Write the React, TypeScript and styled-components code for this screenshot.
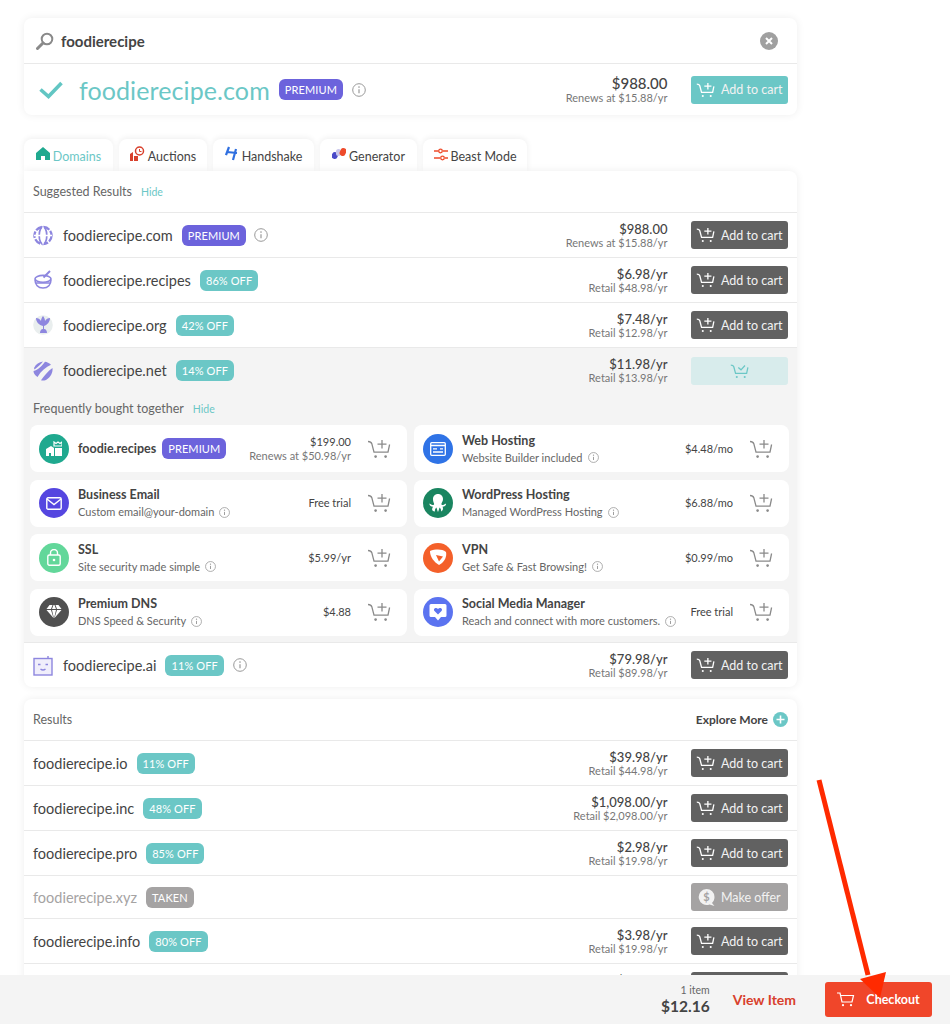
import React from "react";
import styled, { createGlobalStyle } from "styled-components";

const Global = createGlobalStyle`
  html, body { margin: 0; padding: 0; height: 100%; overflow: hidden; background: #fff; }
  body { font-family: "Lato", "Open Sans", "Liberation Sans", sans-serif; color: #444; }
  * { box-sizing: border-box; }
`;

const Page = styled.div`
  width: 773px;
  margin-left: 24px;
  padding-top: 18px;
  display: flex;
  flex-direction: column;
`;
const Card = styled.section`
  background: #fff;
  border-radius: 8px;
  box-shadow: 0 0 8px rgba(0, 0, 0, 0.07);
  overflow: hidden;
`;
const SearchRow = styled.div`
  height: 46px;
  display: flex;
  align-items: center;
  padding: 0 19px 0 12px;
  gap: 7px;
  border-bottom: 1px solid #e9e9e9;
`;
const SearchText = styled.div`
  font-size: 15px;
  font-weight: 700;
  color: #444;
  flex: 1;
`;
const Hero = styled.div`
  height: 51px;
  display: flex;
  align-items: center;
  padding: 0 9px 0 15px;
`;
const HeroName = styled.div`
  font-size: 25px;
  color: #6bc7c6;
  margin: 0 9px 0 16px;
  letter-spacing: 0.1px;
`;
const Badge = styled.span<{ $kind: "premium" | "off" | "taken" }>`
  display: inline-flex;
  align-items: center;
  height: 21px;
  padding: 0 6px;
  border-radius: 6px;
  font-size: 11px;
  letter-spacing: 0.1px;
  color: #fff;
  white-space: nowrap;
  background: ${(p) => (p.$kind === "premium" ? "#6c63dc" : p.$kind === "off" ? "#6bc7c6" : "#a5a3a3")};
`;
const Spacer = styled.div`
  flex: 1;
`;
const Price = styled.div`
  display: flex;
  flex-direction: column;
  align-items: flex-end;
  margin-right: 23px;
`;
const PriceMain = styled.div<{ $big?: boolean }>`
  font-size: ${(p) => (p.$big ? 15 : 13)}px;
  line-height: ${(p) => (p.$big ? 16 : 14)}px;
  font-weight: 500;
  color: #444;
`;
const PriceSub = styled.div`
  font-size: 11px;
  line-height: 13px;
  color: #777;
`;
const CartButton = styled.button<{ $tone: "dark" | "teal" | "pale" | "grey" }>`
  width: 97.5px;
  height: 28px;
  border: 0;
  border-radius: 3px;
  display: flex;
  align-items: center;
  justify-content: center;
  gap: 6px;
  padding: 0;
  font: inherit;
  font-size: 12.5px;
  color: ${(p) => (p.$tone === "pale" ? "#6bc7c6" : "#f2f2f2")};
  background: ${(p) =>
    p.$tone === "dark" ? "#616161" : p.$tone === "teal" ? "#6bc7c6" : p.$tone === "pale" ? "#d8ecec" : "#a5a3a3"};
`;
const Tabs = styled.nav`
  display: flex;
  gap: 6px;
  margin-top: 24px;
  height: 32px;
  position: relative;
`;
const Tab = styled.div<{ $active?: boolean; $w: number }>`
  width: ${(p) => p.$w}px;
  background: #fff;
  border-radius: 8px 8px 0 0;
  box-shadow: 0 -1px 6px rgba(0, 0, 0, 0.07);
  display: flex;
  align-items: center;
  justify-content: center;
  gap: 3px;
  font-size: 12.5px;
  padding-top: 2px;
  color: ${(p) => (p.$active ? "#6bc7c6" : "#444")};
`;
const Panel = styled(Card)`
  border-radius: 0 8px 8px 8px;
  position: relative;
`;
const HeadRow = styled.div`
  height: 42px;
  display: flex;
  align-items: center;
  padding: 0 9px;
  gap: 9px;
  border-bottom: 1px solid #e9e9e9;
  font-size: 12.5px;
  color: #666;
`;
const HideLink = styled.span`
  color: #6bc7c6;
  font-size: 10.5px;
  padding-top: 1px;
`;
const Row = styled.div<{ $h?: number; $flat?: boolean }>`
  height: ${(p) => p.$h ?? 45}px;
  display: flex;
  align-items: center;
  padding: 0 9px;
  border-bottom: ${(p) => (p.$flat ? "0" : "1px solid #e9e9e9")};
`;
const RowIcon = styled.div`
  width: 20px;
  height: 20px;
  margin-right: 10px;
  display: flex;
`;
const RowName = styled.div<{ $muted?: boolean }>`
  font-size: 14.5px;
  color: ${(p) => (p.$muted ? "#a5a3a3" : "#444")};
  margin-right: 9px;
  white-space: nowrap;
`;
const Grey = styled.div`
  background: #f4f4f4;
  height: 295px;
  padding-bottom: 8px;
  border-bottom: 1px solid #e9e9e9;
`;
const SubHead = styled.div`
  display: flex;
  align-items: center;
  gap: 9px;
  height: 32px;
  padding: 0 9px 2px;
  font-size: 12.5px;
  color: #666;
`;
const Bundle = styled.div`
  display: grid;
  grid-template-columns: 377px 375px;
  grid-auto-rows: 47px;
  column-gap: 7px;
  row-gap: 7.5px;
  padding-left: 6px;
`;
const Item = styled.div`
  background: #fff;
  border-radius: 8px;
  display: flex;
  align-items: center;
  padding: 0 16px 0 9px;
`;
const Disc = styled.div<{ $bg: string }>`
  width: 30px;
  height: 30px;
  border-radius: 50%;
  background: ${(p) => p.$bg};
  display: flex;
  align-items: center;
  justify-content: center;
  margin-right: 9px;
  flex: none;
`;
const ItemBody = styled.div`
  display: flex;
  flex-direction: column;
  gap: 3px;
`;
const ItemTitle = styled.div`
  font-size: 12.5px;
  line-height: 15px;
  font-weight: 700;
  color: #444;
  white-space: nowrap;
`;
const ItemSub = styled.div`
  font-size: 11px;
  line-height: 14px;
  color: #666;
  display: flex;
  align-items: center;
  gap: 5px;
  white-space: nowrap;
`;
const ItemPrice = styled.div`
  display: flex;
  flex-direction: column;
  align-items: flex-end;
  margin-right: 16px;
  font-size: 11px;
  line-height: 14px;
  color: #444;
`;
const ItemPriceSub = styled.div`
  color: #777;
`;
const Results = styled(Card)`
  margin-top: 12px;
  height: 400px;
`;
const ExploreMore = styled.div`
  margin-left: auto;
  display: flex;
  align-items: center;
  gap: 5px;
  font-size: 12px;
  font-weight: 700;
  color: #444;
`;
const Footer = styled.footer`
  position: fixed;
  left: 0;
  right: 0;
  bottom: 0;
  height: 49px;
  background: #f4f4f4;
  display: flex;
  align-items: center;
  justify-content: flex-end;
  padding: 0 18px 0 0;
`;
const Total = styled.div`
  display: flex;
  flex-direction: column;
  align-items: flex-end;
  margin-right: 23px;
`;
const TotalCount = styled.div`
  font-size: 10.5px;
  line-height: 13px;
  color: #666;
`;
const TotalSum = styled.div`
  font-size: 15.5px;
  line-height: 18px;
  font-weight: 700;
  color: #444;
`;
const ViewItem = styled.div`
  font-size: 14px;
  font-weight: 700;
  color: #d8402c;
  margin-right: 29px;
`;
const Checkout = styled.button`
  width: 107px;
  height: 35px;
  border: 0;
  border-radius: 3px;
  background: #f0462a;
  color: #fff;
  font: inherit;
  font-size: 12.5px;
  font-weight: 700;
  display: flex;
  align-items: center;
  justify-content: center;
  gap: 11px;
  padding: 0;
`;
const Arrow = styled.svg`
  position: fixed;
  left: 800px;
  top: 770px;
  pointer-events: none;
`;

const Info = ({ s = 13, ml = 0 }: { s?: number; ml?: number }) => (
  <svg width={s} height={s} viewBox="0 0 14 14" fill="none" style={ml ? { marginLeft: ml } : undefined}>
    <circle cx="7" cy="7" r="6.3" stroke="#999" strokeWidth="1" />
    <path d="M7 6.2v4" stroke="#999" strokeWidth="1.2" />
    <circle cx="7" cy="4.1" r=".8" fill="#999" />
  </svg>
);

const CartPlus = ({ c = "#fff", w = 19, h = 16, sw = 1.3 }: { c?: string; w?: number; h?: number; sw?: number }) => (
  <svg width={w} height={h} viewBox="0 0 24 20" fill="none" stroke={c} strokeWidth={sw * (24 / w)}>
    <path d="M1 2.5c2.4 0 3.2.4 3.8 2.2l2.2 8.4h14l1.6-7.6" />
    <path d="M15 1v8.5M10.5 5.2h9" />
    <circle cx="8.6" cy="17.6" r="1.3" fill={c} stroke="none" />
    <circle cx="18.6" cy="17.6" r="1.3" fill={c} stroke="none" />
  </svg>
);

const CartCheck = () => (
  <svg width="19" height="16" viewBox="0 0 24 20" fill="none" stroke="#6bc7c6" strokeWidth="1.6">
    <path d="M1 2.5c2.4 0 3.2.4 3.8 2.2l2.2 8.4h14l1.6-7.6" />
    <path d="M10.5 5.5l3.4 3 5-5.5" />
    <circle cx="8.6" cy="17.6" r="1.3" fill="#6bc7c6" stroke="none" />
    <circle cx="18.6" cy="17.6" r="1.3" fill="#6bc7c6" stroke="none" />
  </svg>
);

const P = "#8d86df";
const Globe = () => (
  <svg width="21" height="21" viewBox="0 0 21 21" fill="none" stroke={P} strokeWidth="2.4">
    <circle cx="10.5" cy="10.5" r="9" strokeDasharray="7 1.5" />
    <ellipse cx="10.5" cy="10.5" rx="4" ry="9" strokeWidth="1.8" />
    <path d="M10.5 1v19M1 10.5h19" stroke="#fff" strokeWidth="1.4" />
  </svg>
);
const Bowl = () => (
  <svg width="20" height="20" viewBox="0 0 20 20" fill="none" stroke={P} strokeWidth="1.6">
    <path d="M10.5 7.5L17 1" strokeWidth="2" />
    <ellipse cx="10" cy="8.8" rx="8" ry="3.4" />
    <path d="M2 9.5c0 5 3 8.5 8 8.5s8-3.5 8-8.5M3 13h14" />
  </svg>
);
const Org = () => (
  <svg width="20" height="20" viewBox="0 0 20 20">
    <circle cx="10" cy="10" r="9.8" fill="#e9eeee" />
    <path d="M3 3c2 0 4 1 5 3 0-2 1-4 2-5 1 1 2 3 2 5 1-2 3-3 5-3 0 4-3 7-6 8v3c2 0 3 2 3 4H7c0-2 1-4 3-4v-3C6 10 3 7 3 3z" fill={P} />
  </svg>
);
const Net = () => (
  <svg width="20" height="20" viewBox="0 0 20 20" fill={P}>
    <path d="M1 7C3 3 6 1 10 .5 8 3 5 6 1.500 8.500zM12 .8c2 .2 4 1.200 6 3C13 6 8 10 4.500 16 1.500 14 .5 12 .5 10 5 9 9 5 12 .8zM19.500 7c.5 4-1.500 9-6.500 12 -2 .6-3.500 .6-5 .3C11 15 15 10 19.500 7z" />
  </svg>
);
const Robot = () => (
  <svg width="20" height="21" viewBox="0 0 20 21" fill="none" stroke={P} strokeWidth="1.400">
    <rect x="1" y="3.500" width="18" height="16.500" fill="#f0eefb" />
    <path d="M15 3.500V1" />
    <path d="M5 9.500h2.500M12.500 9.500H15M7.500 14c1.500 1.200 3.500 1.200 5 0" />
  </svg>
);

const Tile = { fill: "#fff" };
const icons: Record<string, React.ReactNode> = {
  shop: (
    <svg width="16" height="15" viewBox="0 0 16 15" {...Tile}>
      <path d="M0 8l5-3 3 2v8H5v-3H3v3H0zM9 7h7v8H9z" />
      <path d="M8 1l2 1.500L12 1l2 1.500L16 1v4H8z" fill="none" stroke="#fff" strokeWidth="1.200" />
    </svg>
  ),
  mail: (
    <svg width="16" height="13" viewBox="0 0 16 13" fill="none" stroke="#fff" strokeWidth="1.400">
      <rect x=".8" y=".8" width="14.400" height="11.400" rx="1.200" />
      <path d="M1 2l7 5.500L15 2" />
    </svg>
  ),
  lock: (
    <svg width="14" height="17" viewBox="0 0 14 17" fill="none" stroke="#fff" strokeWidth="1.400">
      <rect x=".8" y="6" width="12.400" height="10.200" rx="1.500" />
      <path d="M3.500 6V4a3.500 3.500 0 0 1 7 0v2" />
      <circle cx="7" cy="11" r="1.300" fill="#fff" stroke="none" />
    </svg>
  ),
  gem: (
    <svg width="16" height="14" viewBox="0 0 16 14" {...Tile}>
      <path d="M3.500 0h3L5 4H0.500zM7.500 0h1L10 4H6zM9.500 0h3l3 4H11zM.5 5H5l2.500 8zM6 5h4l-2 8.500zM11 5h4.500l-7 8z" />
    </svg>
  ),
  web: (
    <svg width="16" height="14" viewBox="0 0 16 14" fill="none" stroke="#fff" strokeWidth="1.300">
      <rect x=".7" y=".7" width="14.600" height="12.600" rx="1" />
      <path d="M.7 3.500h14.600M3 6.800h4M10 6.800h3M3 10h10" />
    </svg>
  ),
  octo: (
    <svg width="20" height="19" viewBox="0 0 20 19" {...Tile}>
      <path d="M10 0c3 0 5 2.300 5 5 0 2-1 3.300-1.500 4.500-.4 1 .5 1.800 1.500 1.500 1.300-.3 2-1 3-1.500.5 2-1.500 3.300-3.500 3.300 1 1.500.5 4-1.500 4.700.5-1.500-.5-3.500-1.500-4-.4 1.500-1 3.500-1.500 4.500-.5-1-1.100-3-1.500-4.500-1 .5-2 2.500-1.500 4C3 16.800 4 14.300 5 12.800c-2 0-4-1.300-3.500-3.300 1 .5 1.700 1.200 3 1.500 1 .3 1.900-.5 1.500-1.500C5.500 8.300 5 7 5 5c0-2.700 2-5 5-5z" />
    </svg>
  ),
  vpn: (
    <svg width="20" height="20" viewBox="0 0 20 20">
      <path d="M2 3c6-2 12-2 16 1 1 4-1 10-7 13C6 14 2 9 2 3z" fill="#fff" />
      <path d="M8 7l7 1.500-4 5z" fill="#f4602a" />
    </svg>
  ),
  social: (
    <svg width="18" height="18" viewBox="0 0 18 18">
      <path d="M2 1h14a1.500 1.500 0 0 1 1.500 1.500v10A1.500 1.500 0 0 1 16 14h-4l-3 3.500L6 14H2A1.500 1.500 0 0 1 .5 12.500v-10A1.500 1.500 0 0 1 2 1z" fill="#fff" />
      <path d="M9 11.500L5.500 8c-1.800-2 1.500-4.200 3.500-2 2-2.200 5.300 0 3.500 2z" fill="#5b73f0" />
    </svg>
  ),
};

type Tone = "dark" | "teal" | "pale";
const AddButton = ({ tone = "dark" as Tone }) => (
  <CartButton $tone={tone}>
    <CartPlus />
    Add to cart
  </CartButton>
);

const tabs = [
  { label: "Domains", w: 89, active: true,
    icon: (<svg width="14" height="13" viewBox="0 0 14 13" fill="#1fa98f" style={{ marginTop: -5 }}><path d="M7 0l7 6v7H9V9H5v4H0V6z" /></svg>) },
  { label: "Auctions", w: 88,
    icon: (<svg width="15" height="15" viewBox="0 0 15 15" fill="none" style={{ marginTop: -5 }}><circle cx="9.500" cy="5" r="4" stroke="#d8402c" strokeWidth="1.500" /><path d="M9.500 3v2.500h2" stroke="#d8402c" /><path d="M0 8l3-2v9H0zM4 10h4v5H4z" fill="#d8402c" /></svg>) },
  { label: "Handshake", w: 101,
    icon: (<svg width="14" height="15" viewBox="0 0 14 15" stroke="#2f6fe0" strokeWidth="2.200" style={{ marginTop: -5 }}><path d="M4 1L1 9M11 3L8 14M2 6l10 1" /></svg>) },
  { label: "Generator", w: 97,
    icon: (<svg width="14" height="12" viewBox="0 0 14 12" style={{ marginTop: -4 }}><rect x="0" y="4" width="6" height="7" rx="3" fill="#4a4ac8" transform="rotate(20 3 7)" /><rect x="4" y="1" width="5" height="7" rx="2.500" fill="#c9c6ea" /><rect x="8" y="0" width="6" height="8" rx="3" fill="#ee4b2b" transform="rotate(25 11 4)" /></svg>) },
  { label: "Beast Mode", w: 104,
    icon: (<svg width="14" height="13" viewBox="0 0 14 13" fill="none" stroke="#ee4b2b" strokeWidth="1.300" style={{ marginTop: -3 }}><path d="M0 3h4M9 3h5M0 10h6M11 10h3" /><circle cx="6.500" cy="3" r="1.800" /><circle cx="8.500" cy="10" r="1.800" /></svg>) },
];

const suggested = [
  { name: "foodierecipe.com", icon: <Globe />, kind: "premium" as const, badge: "PREMIUM", info: true, price: "$988.00", sub: "Renews at $15.88/yr" },
  { name: "foodierecipe.recipes", icon: <Bowl />, kind: "off" as const, badge: "86% OFF", price: "$6.98/yr", sub: "Retail $48.98/yr" },
  { name: "foodierecipe.org", icon: <Org />, kind: "off" as const, badge: "42% OFF", price: "$7.48/yr", sub: "Retail $12.98/yr" },
];

const bundle = [
  { icon: "shop", bg: "#1fa98f", title: "foodie.recipes", premium: true, price: "$199.00", priceSub: "Renews at $50.98/yr" },
  { icon: "web", bg: "#2f73e6", title: "Web Hosting", sub: "Website Builder included", price: "$4.48/mo" },
  { icon: "mail", bg: "#5546e0", title: "Business Email", sub: "Custom email@your-domain", price: "Free trial" },
  { icon: "octo", bg: "#1a8560", title: "WordPress Hosting", sub: "Managed WordPress Hosting", price: "$6.88/mo" },
  { icon: "lock", bg: "#62d79a", title: "SSL", sub: "Site security made simple", price: "$5.99/yr" },
  { icon: "vpn", bg: "#f4602a", title: "VPN", sub: "Get Safe & Fast Browsing!", price: "$0.99/mo" },
  { icon: "gem", bg: "#505050", title: "Premium DNS", sub: "DNS Speed & Security", price: "$4.88" },
  { icon: "social", bg: "#5b73f0", title: "Social Media Manager", sub: "Reach and connect with more customers.", price: "Free trial" },
];

const results = [
  { name: "foodierecipe.io", badge: "11% OFF", price: "$39.98/yr", sub: "Retail $44.98/yr" },
  { name: "foodierecipe.inc", badge: "48% OFF", price: "$1,098.00/yr", sub: "Retail $2,098.00/yr" },
  { name: "foodierecipe.pro", badge: "85% OFF", price: "$2.98/yr", sub: "Retail $19.98/yr" },
  { name: "foodierecipe.xyz", badge: "TAKEN", taken: true },
  { name: "foodierecipe.info", badge: "80% OFF", price: "$3.98/yr", sub: "Retail $19.98/yr" },
  { name: "foodierecipe.co", badge: "50% OFF", price: "$9.98/yr", sub: "Retail $19.98/yr" },
];

export default function App() {
  return (
    <>
      <Global />
      <Page>
        <Card>
          <SearchRow>
            <svg width="18" height="18" viewBox="0 0 18 18" fill="none" stroke="#8a8a8a">
              <circle cx="11" cy="7" r="5.300" strokeWidth="2" />
              <path d="M7 11l-5.500 5.500" strokeWidth="3" strokeLinecap="round" />
            </svg>
            <SearchText>foodierecipe</SearchText>
            <svg width="18" height="18" viewBox="0 0 18 18">
              <circle cx="9" cy="9" r="9" fill="#a0a0a0" />
              <path d="M6 6l6 6M12 6l-6 6" stroke="#fff" strokeWidth="2" />
            </svg>
          </SearchRow>
          <Hero>
            <svg width="24" height="18" viewBox="0 0 24 18" fill="none" stroke="#62c6c3" strokeWidth="3.600">
              <path d="M1.500 8.500l8 7L22.500 2" />
            </svg>
            <HeroName>foodierecipe.com</HeroName>
            <Badge $kind="premium">PREMIUM</Badge>
            <Info s={14} ml={9} />
            <Spacer />
            <Price>
              <PriceMain $big>$988.00</PriceMain>
              <PriceSub>Renews at $15.88/yr</PriceSub>
            </Price>
            <AddButton tone="teal" />
          </Hero>
        </Card>

        <Tabs>
          {tabs.map((t) => (
            <Tab key={t.label} $active={t.active} $w={t.w}>
              {t.icon}
              {t.label}
            </Tab>
          ))}
        </Tabs>

        <Panel>
          <HeadRow>
            Suggested Results <HideLink>Hide</HideLink>
          </HeadRow>
          {suggested.map((s) => (
            <Row key={s.name}>
              <RowIcon>{s.icon}</RowIcon>
              <RowName>{s.name}</RowName>
              <Badge $kind={s.kind}>{s.badge}</Badge>
              {s.info && <Info s={14} ml={8} />}
              <Spacer />
              <Price>
                <PriceMain>{s.price}</PriceMain>
                <PriceSub>{s.sub}</PriceSub>
              </Price>
              <AddButton />
            </Row>
          ))}
          <Grey>
            <Row $flat>
              <RowIcon><Net /></RowIcon>
              <RowName>foodierecipe.net</RowName>
              <Badge $kind="off">14% OFF</Badge>
              <Spacer />
              <Price>
                <PriceMain>$11.98/yr</PriceMain>
                <PriceSub>Retail $13.98/yr</PriceSub>
              </Price>
              <CartButton $tone="pale"><CartCheck /></CartButton>
            </Row>
            <SubHead>
              Frequently bought together <HideLink>Hide</HideLink>
            </SubHead>
            <Bundle>
              {bundle.map((b) => (
                <Item key={b.title}>
                  <Disc $bg={b.bg}>{icons[b.icon]}</Disc>
                  <ItemBody>
                    <ItemTitle>{b.title}</ItemTitle>
                    {b.sub && (
                      <ItemSub>
                        {b.sub}
                        <Info s={11} />
                      </ItemSub>
                    )}
                  </ItemBody>
                  {b.premium && (
                    <Badge $kind="premium" style={{ marginLeft: 6 }}>PREMIUM</Badge>
                  )}
                  <Spacer />
                  <ItemPrice>
                    {b.price}
                    {b.priceSub && <ItemPriceSub>{b.priceSub}</ItemPriceSub>}
                  </ItemPrice>
                  <CartPlus c="#8a8a8a" w={24} h={20} sw={1.300} />
                </Item>
              ))}
            </Bundle>
          </Grey>
          <Row $flat $h={44}>
            <RowIcon><Robot /></RowIcon>
            <RowName>foodierecipe.ai</RowName>
            <Badge $kind="off">11% OFF</Badge>
            <Info s={14} ml={9} />
            <Spacer />
            <Price>
              <PriceMain>$79.98/yr</PriceMain>
              <PriceSub>Retail $89.98/yr</PriceSub>
            </Price>
            <AddButton />
          </Row>
        </Panel>

        <Results>
          <HeadRow>
            Results
            <ExploreMore>
              Explore More
              <svg width="15" height="15" viewBox="0 0 15 15">
                <circle cx="7.500" cy="7.500" r="7.500" fill="#6bc7c6" />
                <path d="M7.500 3.500v8M3.500 7.500h8" stroke="#fff" strokeWidth="1.600" />
              </svg>
            </ExploreMore>
          </HeadRow>
          {results.map((r) => (
            <Row key={r.name} $h={r.taken ? 43 : 45}>
              <RowName $muted={r.taken}>{r.name}</RowName>
              <Badge $kind={r.taken ? "taken" : "off"}>{r.badge}</Badge>
              <Spacer />
              {r.taken ? (
                <CartButton $tone="grey">
                  <svg width="17" height="17" viewBox="0 0 17 17">
                    <path d="M8.500 0a8 8 0 0 1 8 8c0 2.500-1 4.500-2.500 6l2.500 3-5-1.500A8 8 0 1 1 8.500 0z" fill="#f2f2f2" />
                    <text x="8.500" y="12" textAnchor="middle" fontSize="11" fill="#a5a3a3" fontFamily="Lato, sans-serif" fontWeight="700">$</text>
                  </svg>
                  Make offer
                </CartButton>
              ) : (
                <>
                  <Price>
                    <PriceMain>{r.price}</PriceMain>
                    <PriceSub>{r.sub}</PriceSub>
                  </Price>
                  <AddButton />
                </>
              )}
            </Row>
          ))}
        </Results>
      </Page>

      <Footer>
        <Total>
          <TotalCount>1 item</TotalCount>
          <TotalSum>$12.16</TotalSum>
        </Total>
        <ViewItem>View Item</ViewItem>
        <Checkout>
          <svg width="18" height="15" viewBox="0 0 18 15" fill="none" stroke="#fff" strokeWidth="1.200">
            <path d="M0 1h3l2 9h10l1.500-6.500H4" />
            <circle cx="6" cy="13.200" r="1.100" fill="#fff" stroke="none" />
            <circle cx="14" cy="13.200" r="1.100" fill="#fff" stroke="none" />
          </svg>
          Checkout
        </Checkout>
      </Footer>

      <Arrow width="100" height="240" viewBox="0 0 100 240">
        <path d="M19 10L68 205" stroke="#ff2a00" strokeWidth="5" fill="none" />
        <path d="M60 209L86 202L80 228Z" fill="#ff2a00" />
      </Arrow>
    </>
  );
}
